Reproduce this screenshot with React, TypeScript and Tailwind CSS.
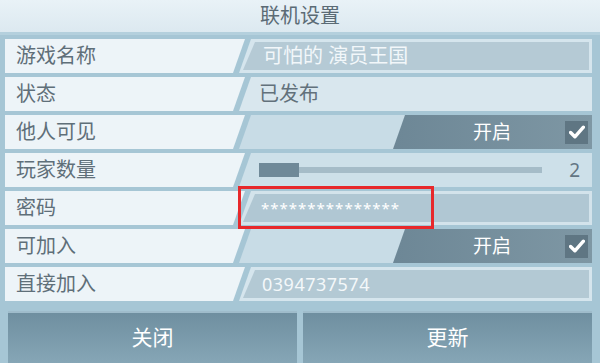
import React from "react";

// Game lobby "online settings" panel, drawn with flat slanted cells.

const FONT = { fontFamily: '"Noto Sans", "Noto Sans CJK SC", sans-serif' };

const labelClip = "[clip-path:polygon(0_0,100%_0,calc(100%-12px)_100%,0_100%)]";
const valueClip = "[clip-path:polygon(12px_0,100%_0,100%_100%,0_100%)]";

function Label({ text }: { text: string }) {
  return (
    <div className={`w-[240px] shrink-0 h-full bg-[#edf4f8] ${labelClip} flex items-center pl-[11px] text-[20px] text-[#5f6f79]`}>
      {text}
    </div>
  );
}

function Check() {
  return (
    <div className="w-[23px] h-[23px] bg-[#5f7683] flex items-center justify-center">
      <svg width="16" height="14" viewBox="0 0 15 13">
        <path d="M1.5 7 L5.5 11 L13.5 2" stroke="#fff" strokeWidth="3.2" fill="none" strokeLinecap="round" strokeLinejoin="round" />
      </svg>
    </div>
  );
}

function Toggle() {
  return (
    <div className={`flex-1 h-full -ml-[6px] bg-[#c8dce6] ${valueClip} flex`}>
      <div className="w-[154px]" />
      <div className={`flex-1 h-full bg-gradient-to-r from-[#6d8796] to-[#7e97a4] ${valueClip} flex items-center`}>
        <div className="flex-1 text-center text-white text-[19px] pl-[26px]">开启</div>
        <div className="pr-[4px]"><Check /></div>
      </div>
    </div>
  );
}

function Row({ label, children }: { label: string; children: React.ReactNode }) {
  return (
    <div className="flex h-[34px] pl-[5px] pr-[8px]">
      <Label text={label} />
      {children}
    </div>
  );
}

export default function App() {
  return (
    <div className="w-[600px] h-[363px] overflow-hidden bg-[#a6c6d5] flex flex-col" style={FONT}>
      <div className="h-[35px] shrink-0 bg-gradient-to-b from-[#e9f2f7] to-[#dce9f0] border-b-[3px] border-[#b4d0dd] flex items-center justify-center text-[20px] text-[#5b6b75]">
        联机设置
      </div>
      <div className="flex flex-col gap-[4px] pt-[4px]">
        <Row label="游戏名称">
          <div className={`flex-1 h-full -ml-[6px] bg-[#d5e5ed] ${valueClip} p-[3px] pl-[4px]`}>
            <div className={`h-full bg-[#b5cad5] ${valueClip} flex items-center pl-[20px] text-[20px] text-[#f2f7fa]`}>
              可怕的 演员王国
            </div>
          </div>
        </Row>
        <Row label="状态">
          <div className={`flex-1 h-full -ml-[6px] bg-[#d9e7ee] ${valueClip} flex items-center pl-[20px] text-[20px] text-[#62717b]`}>
            已发布
          </div>
        </Row>
        <Row label="他人可见">
          <Toggle />
        </Row>
        <Row label="玩家数量">
          <div className={`flex-1 h-full -ml-[6px] bg-[#cde0e9] ${valueClip} flex items-center pl-[20px] pr-[12px]`}>
            <div className="relative w-[283px] h-[6px] bg-[#a5bcc8]">
              <div className="absolute left-0 top-[-4px] w-[40px] h-[14px] bg-[#6f8998]" />
            </div>
            <div className="flex-1 text-right text-[19px] text-[#637684]">2</div>
          </div>
        </Row>
        <Row label="密码">
          <div className="relative flex-1 h-full -ml-[6px]">
            <div className={`h-full bg-[#d3e3eb] ${valueClip} p-[3px] pl-[4px]`}>
              <div className={`h-full bg-[#b0c7d3] ${valueClip} flex items-center pl-[18px] text-[15px] tracking-[1px] text-white`}>
                ***************
              </div>
            </div>
            <div className="absolute left-[-1px] top-[-5px] w-[196px] h-[43px] border-[3px] border-[#e7282b]" />
          </div>
        </Row>
        <Row label="可加入">
          <Toggle />
        </Row>
        <Row label="直接加入">
          <div className={`flex-1 h-full -ml-[6px] bg-[#d5e5ed] ${valueClip} p-[3px] pl-[4px]`}>
            <div className={`h-full bg-[#b3c9d4] ${valueClip} flex items-center pl-[19px] text-[18px] tracking-[0.5px] text-[#f4f8fa]`}>
              0394737574
            </div>
          </div>
        </Row>
      </div>
      <div className="flex gap-[6px] px-[8px] pt-[10px] flex-1">
        <div className="flex-1 bg-gradient-to-b from-[#6f8fa0] to-[#86a6b6] border-t-[2px] border-[#9fbccb] flex items-center justify-center text-white text-[21px]">
          关闭
        </div>
        <div className="flex-1 bg-gradient-to-b from-[#6f8fa0] to-[#86a6b6] border-t-[2px] border-[#9fbccb] flex items-center justify-center text-white text-[21px]">
          更新
        </div>
      </div>
    </div>
  );
}
